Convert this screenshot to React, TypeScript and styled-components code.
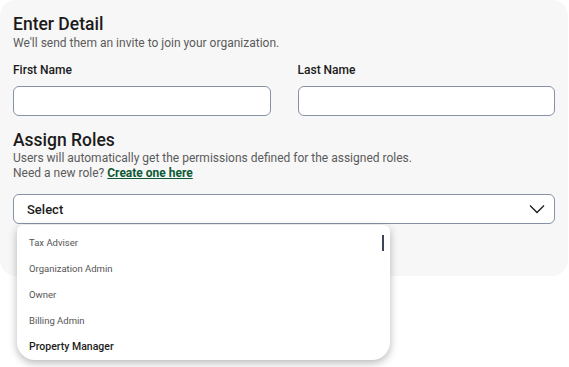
import styled, { createGlobalStyle } from "styled-components";

const GlobalStyle = createGlobalStyle`
    body {
        margin: 0;
        background: #ffffff;
        font-family: Roboto, "Liberation Sans", sans-serif;
    }
`;

const Page = styled.div`
    height: 367px;
`;

// Grey card holding the form
const Panel = styled.div`
    box-sizing: border-box;
    width: 568px;
    height: 276px;
    padding: 13px 13px 0 13px;
    background-color: #f7f7f7;
    border-radius: 16px;
`;

const Heading = styled.h2<{ $top?: number }>`
    margin: ${(p) => p.$top ?? 0}px 0 0 0;
    font-size: 17.5px;
    line-height: 22px;
    font-weight: 500;
    color: #1b1b1b;
`;

const SubText = styled.p<{ $top?: number }>`
    margin: ${(p) => p.$top ?? 0}px 0 0 0;
    font-size: 12px;
    line-height: 15px;
    color: #5b5b5b;
`;

const CreateLink = styled.a`
    color: #0e5a35;
    font-weight: 700;
    text-decoration: underline;
`;

const FieldRow = styled.div`
    display: grid;
    grid-template-columns: 1fr 1fr;
    column-gap: 27px;
    margin-top: 11px;
`;

const Field = styled.div`
    display: flex;
    flex-direction: column;
    gap: 8px;
`;

const Label = styled.label`
    font-size: 12px;
    line-height: 16px;
    font-weight: 500;
    color: #1b1b1b;
`;

const TextInput = styled.input`
    box-sizing: border-box;
    height: 30px;
    border: 1px solid #8791a5;
    border-radius: 6px;
    background: #ffffff;
    outline: none;
`;

const SelectWrap = styled.div`
    position: relative;
    margin-top: 13px;
`;

const SelectBox = styled.div`
    box-sizing: border-box;
    height: 30px;
    display: flex;
    align-items: center;
    justify-content: space-between;
    padding: 0 9px 0 13px;
    border: 1px solid #8791a5;
    border-radius: 6px;
    background: #ffffff;
    font-size: 13px;
    font-weight: 500;
    color: #1b1b1b;
`;

// Open option list floating below the select
const Menu = styled.ul`
    position: absolute;
    top: 31px;
    left: 4px;
    z-index: 2;
    box-sizing: border-box;
    width: 373px;
    height: 135px;
    margin: 0;
    padding: 5px 0 0 0;
    list-style: none;
    background: #ffffff;
    border-radius: 6px 6px 18px 18px;
    box-shadow: 0 3px 8px rgba(0, 0, 0, 0.28);
`;

const Option = styled.li<{ $active?: boolean }>`
    height: 26px;
    line-height: 26px;
    padding-left: 12px;
    font-size: ${(p) => (p.$active ? "10.5px" : "9.5px")};
    font-weight: ${(p) => (p.$active ? 500 : 400)};
    color: ${(p) => (p.$active ? "#1b1b1b" : "#555555")};
`;

const ScrollThumb = styled.div`
    position: absolute;
    top: 10px;
    right: 6px;
    width: 2px;
    height: 16px;
    background: #3c4455;
`;

const roles = ["Tax Adviser", "Organization Admin", "Owner", "Billing Admin", "Property Manager"];

export default function App() {
    return (
        <Page>
            <GlobalStyle />
            <Panel>
                <Heading>Enter Detail</Heading>
                <SubText $top={1}>We'll send them an invite to join your organization.</SubText>
                <FieldRow>
                    <Field>
                        <Label>First Name</Label>
                        <TextInput />
                    </Field>
                    <Field>
                        <Label>Last Name</Label>
                        <TextInput />
                    </Field>
                </FieldRow>
                <Heading $top={13}>Assign Roles</Heading>
                <SubText>
                    Users will automatically get the permissions defined for the assigned roles.
                    <br />
                    Need a new role? <CreateLink href="#">Create one here</CreateLink>
                </SubText>
                <SelectWrap>
                    <SelectBox>
                        Select
                        <svg width="16" height="10" viewBox="0 0 16 10">
                            <polyline points="1,1.5 8,8.5 15,1.5" fill="none" stroke="#1b1b1b" strokeWidth="1.3" />
                        </svg>
                    </SelectBox>
                    <Menu>
                        {roles.map((r, i) => (
                            <Option key={r} $active={i === roles.length - 1}>{r}</Option>
                        ))}
                        <ScrollThumb />
                    </Menu>
                </SelectWrap>
            </Panel>
        </Page>
    );
}
